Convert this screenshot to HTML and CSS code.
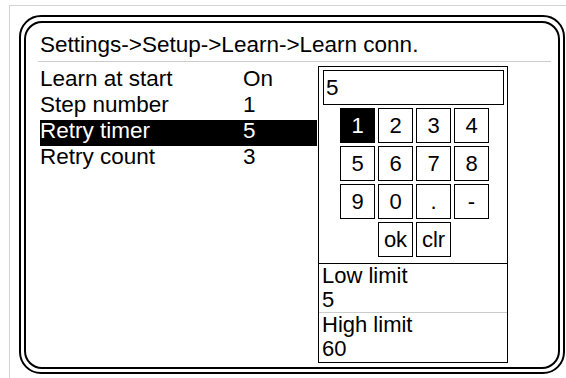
FILE: index.html
```html
<!DOCTYPE html>
<html>
<head>
<meta charset="utf-8">
<link rel="stylesheet" href="styles.css">
</head>
<body>
<div class="frame">
  <div class="bezel">
    <div class="screen">
      <div class="title">Settings-&gt;Setup-&gt;Learn-&gt;Learn conn.</div>
      <div class="rule"></div>
      <div class="main">
        <div class="list">
          <div class="row"><span class="label">Learn at start</span><span class="value">On</span></div>
          <div class="row"><span class="label">Step number</span><span class="value">1</span></div>
          <div class="row sel"><span class="label">Retry timer</span><span class="value">5</span></div>
          <div class="row"><span class="label">Retry count</span><span class="value">3</span></div>
        </div>
        <div class="panel">
          <div class="input">5</div>
          <div class="keypad">
            <div class="key sel">1</div>
            <div class="key">2</div>
            <div class="key">3</div>
            <div class="key">4</div>
            <div class="key">5</div>
            <div class="key">6</div>
            <div class="key">7</div>
            <div class="key">8</div>
            <div class="key">9</div>
            <div class="key">0</div>
            <div class="key">.</div>
            <div class="key">-</div>
            <div class="key empty"></div>
            <div class="key">ok</div>
            <div class="key">clr</div>
          </div>
          <div class="limits">
            <div class="limit">Low limit<br>5</div>
            <div class="limit">High limit<br>60</div>
          </div>
        </div>
      </div>
    </div>
  </div>
</div>
</body>
</html>
```
FILE: styles.css
```css
html, body {
  margin: 0;
  background: #fff;
}
body {
  font-family: "Liberation Sans", Arial, sans-serif;
  color: #000;
  overflow: hidden;
}
.frame {
  margin: 5px 0 0 9px;
  border-top: 1px solid #d4d4d4;
  border-left: 1px solid #d4d4d4;
  height: 380px;
  padding: 9px 0 0 9px;
}
.bezel {
  width: 546px;
  height: 359px;
  box-sizing: border-box;
  border: 2px solid #000;
  border-radius: 22px;
  padding: 4px 3px 3px 3px;
}
.screen {
  height: 100%;
  box-sizing: border-box;
  border: 2px solid #000;
  border-radius: 18px;
  padding: 9px 0 0 14px;
}
.title {
  font-size: 22.5px;
  line-height: 26px;
  height: 26px;
  white-space: nowrap;
}
.rule {
  height: 1px;
  background: #cccccc;
  margin: 3px 7px 0 -2px;
}
.main {
  display: flex;
  margin-top: 4px;
}
.list {
  width: 277px;
  margin-top: 2px;
}
.row {
  display: flex;
  height: 26px;
  line-height: 22px;
  font-size: 22.5px;
  white-space: nowrap;
}
.row .label {
  width: 203px;
}
.row.sel {
  background: #000;
  color: #fff;
}
.panel {
  width: 190px;
  height: 297px;
  box-sizing: border-box;
  border: 1px solid #000;
  margin-left: 1px;
}
.input {
  margin: 3px 3px 0 4px;
  height: 35px;
  box-sizing: border-box;
  border: 1px solid #000;
  font-size: 22.5px;
  line-height: 33px;
  padding-left: 2px;
}
.keypad {
  display: grid;
  grid-template-columns: repeat(4, 35px);
  grid-auto-rows: 35px;
  gap: 3px;
  margin: 3px 0 0 21px;
}
.key {
  border: 1px solid #000;
  box-sizing: border-box;
  font-size: 22px;
  display: flex;
  align-items: center;
  justify-content: center;
}
.key.sel {
  background: #000;
  color: #fff;
}
.key.empty {
  border: none;
}
.limits {
  margin-top: 6px;
  border-top: 1px solid #000;
}
.limit {
  padding-left: 3px;
  font-size: 22px;
  line-height: 24px;
}
.limit + .limit {
  border-top: 1px solid #cccccc;
}
```
